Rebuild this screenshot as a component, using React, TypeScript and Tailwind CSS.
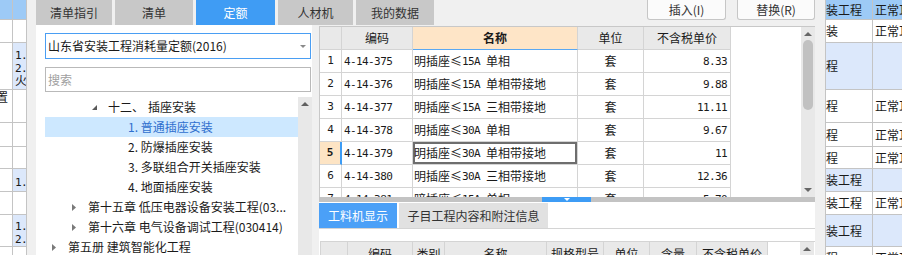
import React from 'react';

const LINE = 'border-[#c4c4c4]';

type BgRow = { h: string; head?: boolean; blue?: boolean; l1?: string; l2?: string[]; r1: string; r2: string };

const bgRows: BgRow[] = [
  { h: 'h-[20px]', head: true, r1: '装工程', r2: '正常耳' },
  { h: 'h-[23px]', r1: '装', r2: '正常耳' },
  { h: 'h-[47px]', blue: true, l2: ['1.', '2.', '火'], r1: '程', r2: '' },
  { h: 'h-[33px]', l1: '置', r1: '程', r2: '正常耳' },
  { h: 'h-[24px]', r1: '程', r2: '正常耳' },
  { h: 'h-[22px]', r1: '程', r2: '正常耳' },
  { h: 'h-[23px]', blue: true, l2: ['1.'], r1: '装工程', r2: '' },
  { h: 'h-[23px]', r1: '装工程', r2: '正常耳' },
  { h: 'h-[32px]', blue: true, l2: ['1.', '2.'], r1: '装工程', r2: '' },
  { h: 'h-[23px]', r1: '程', r2: '正常耳' },
];

function cellBg(r: BgRow) {
  if (r.head) return 'bg-[#9dcaf6]';
  if (r.blue) return 'bg-[#dce8fb]';
  return 'bg-white';
}

function Mixed({ t }: { t: string }) {
  const parts = t.split(/([A-Za-z0-9.\- ]+|≤)/).filter(Boolean);
  return (
    <>
      {parts.map((p, i) => {
        if (p === '≤')
          return (
            <span key={i} className="inline-block w-[12px] text-center">
              ≤
            </span>
          );
        if (/^[A-Za-z0-9.\- ]+$/.test(p))
          return (
            <span key={i} className="font-['DejaVu_Sans_Mono',monospace] text-[11px] tracking-[-0.6px] whitespace-pre">
              {p}
            </span>
          );
        return <span key={i}>{p}</span>;
      })}
    </>
  );
}

function Up({ color = '#666666' }: { color?: string }) {
  return (
    <svg width="8" height="4" viewBox="0 0 8 4" className="block shrink-0">
      <path d="M0 4 L4 0 L8 4 Z" fill={color} />
    </svg>
  );
}
function Down({ color = '#666666' }: { color?: string }) {
  return (
    <svg width="8" height="4" viewBox="0 0 8 4" className="block shrink-0">
      <path d="M0 0 L8 0 L4 4 Z" fill={color} />
    </svg>
  );
}

function LeftSliver() {
  return (
    <div className={`w-[27px] shrink-0 flex flex-col border-r ${LINE} overflow-hidden`}>
      {bgRows.map((r, i) => (
        <div key={i} className={`${r.h} shrink-0 flex border-b ${LINE}`}>
          <div className={`w-[13px] shrink-0 border-r ${LINE} overflow-hidden flex items-start ${r.head ? 'bg-[#9dcaf6]' : 'bg-white'}`}>
            {r.l1 && <span className="-ml-[4px] mt-[1px] leading-none text-[12px]">{r.l1}</span>}
          </div>
          <div className={`flex-1 overflow-hidden flex flex-col justify-center pl-[2px] ${cellBg(r)}`}>
            {r.l2?.map((s, j) => (
              <div key={j} className="leading-[13px] h-[13px] whitespace-nowrap">
                {s === '火' ? (
                  <span className="text-[12px]">{s}</span>
                ) : (
                  <span className="font-['DejaVu_Sans_Mono',monospace] text-[11px] tracking-[-0.6px]">{s}</span>
                )}
              </div>
            ))}
          </div>
        </div>
      ))}
    </div>
  );
}

function RightSliver() {
  return (
    <div className={`flex-1 flex flex-col border-l ${LINE} overflow-hidden`}>
      {bgRows.map((r, i) => (
        <div key={i} className={`${r.h} shrink-0 flex border-b ${LINE} ${cellBg(r)}`}>
          <div className={`w-[47px] shrink-0 border-r ${LINE} flex items-center overflow-hidden whitespace-nowrap leading-none`}>
            {r.r1}
          </div>
          <div className="flex-1 flex items-center pl-[2px] overflow-hidden whitespace-nowrap leading-none">{r.r2}</div>
        </div>
      ))}
    </div>
  );
}

const topTabs = [
  { t: '清单指引', w: 'w-[76px]' },
  { t: '清单', w: 'w-[78px]' },
  { t: '定额', w: 'w-[79px]', active: true },
  { t: '人材机', w: 'w-[75px]' },
  { t: '我的数据', w: 'w-[78px]' },
];

type TreeItem = { t: string; pre?: string; pl: string; tri?: 'open' | 'closed'; sel?: boolean };

const tree: TreeItem[] = [
  { pre: '十二、', t: '插座安装', pl: 'pl-[47px]', tri: 'open' },
  { t: '1. 普通插座安装', pl: 'pl-[83px]', sel: true },
  { t: '2. 防爆插座安装', pl: 'pl-[83px]' },
  { t: '3. 多联组合开关插座安装', pl: 'pl-[83px]' },
  { t: '4. 地面插座安装', pl: 'pl-[83px]' },
  { t: '第十五章 低压电器设备安装工程(03...', pl: 'pl-[27px]', tri: 'closed' },
  { t: '第十六章 电气设备调试工程(030414)', pl: 'pl-[27px]', tri: 'closed' },
  { t: '第五册 建筑智能化工程', pl: 'pl-[7px]', tri: 'closed' },
];

function LeftPanel() {
  return (
    <div className="w-[276px] shrink-0 bg-white flex flex-col pl-[9px] pt-[8px]">
      <div className="w-[266px] h-[26px] border border-[#4a9ef3] flex items-center pl-[2px] pr-[4px]">
        <span className="flex-1 leading-none whitespace-nowrap">山东省安装工程消耗量定额(2016)</span>
        <svg width="6" height="3" viewBox="0 0 6 3" className="block">
          <path d="M0 0 L6 0 L3 3 Z" fill="#8a8a8a" />
        </svg>
      </div>
      <div className="mt-[8px] w-[266px] h-[25px] border border-[#b9b9b9] flex items-center pl-[2px] text-[#a0a0a0] leading-none">
        搜索
      </div>
      <div className="mt-[5px] flex flex-1 min-h-0">
        <div className="w-[253px] flex flex-col">
          {tree.map((it, i) => (
            <div
              key={i}
              className={`h-[20px] shrink-0 flex items-center whitespace-nowrap leading-none ${it.pl} ${
                it.sel ? 'bg-[#cde8ff] text-[#2f6fce]' : 'text-[#1a1a1a]'
              }`}
            >
              {it.tri === 'open' && (
                <span className="w-[16px] flex">
                  <svg width="5" height="5" viewBox="0 0 5 5" className="block">
                    <path d="M5 0 L5 5 L0 5 Z" fill="#595959" />
                  </svg>
                </span>
              )}
              {it.tri === 'closed' && (
                <span className="w-[16px] flex">
                  <svg width="4" height="7" viewBox="0 0 4 7" className="block">
                    <path d="M0 0 L4 3.5 L0 7 Z" fill="#7a7a7a" />
                  </svg>
                </span>
              )}
              {it.pre && <span className="mr-[4px]">{it.pre}</span>}
              <span>{it.t}</span>
            </div>
          ))}
        </div>
        <div className="w-[14px] bg-[#e8e8e8] flex flex-col items-center pt-[5px]">
          <Up color="#606060" />
        </div>
      </div>
    </div>
  );
}

const rows = [
  ['1', '4-14-375', '明插座≤15A 单相', '套', '8.33'],
  ['2', '4-14-376', '明插座≤15A 单相带接地', '套', '9.88'],
  ['3', '4-14-377', '明插座≤15A 三相带接地', '套', '11.11'],
  ['4', '4-14-378', '明插座≤30A 单相', '套', '9.67'],
  ['5', '4-14-379', '明插座≤30A 单相带接地', '套', '11'],
  ['6', '4-14-380', '明插座≤30A 三相带接地', '套', '12.36'],
  ['7', '4-14-381', '暗插座≤15A 单相', '套', '5.70'],
];

const G = 'border-[#d4d4d4]';

function MainTable() {
  return (
    <div className="h-[171px] shrink-0 flex border-t border-l border-[#c8c8c8] bg-white overflow-hidden">
      <div className="flex-1 flex flex-col">
        <div className="h-[23px] shrink-0 flex">
          <div className={`w-[22px] h-full bg-[#e9e9e9] border-r border-b ${G}`} />
          <div className={`w-[71px] h-full bg-[#e9e9e9] border-r border-b ${G} flex items-center justify-center leading-none`}>编码</div>
          <div className={`w-[165px] h-full bg-[#fee5c7] border-r ${G} border-b border-b-[#5aa8f2] flex items-center justify-center leading-none font-bold`}>
            名称
          </div>
          <div className={`w-[66px] h-full bg-[#e9e9e9] border-r border-b ${G} flex items-center justify-center leading-none`}>单位</div>
          <div className={`w-[87px] h-full bg-[#e9e9e9] border-r border-b ${G} flex items-center justify-center leading-none`}>不含税单价</div>
        </div>
        {rows.map((r) => {
          const sel = r[0] === '5';
          return (
            <div key={r[0]} className="h-[23px] shrink-0 flex">
              <div
                className={`w-[22px] h-full border-b ${G} flex items-center justify-center font-['DejaVu_Sans_Mono',monospace] text-[11px] ${
                  sel ? 'bg-[#fde4c4] font-bold border-r-2 border-r-[#3d9cf5]' : `bg-white border-r ${G}`
                }`}
              >
                {r[0]}
              </div>
              <div className={`w-[71px] h-full border-r border-b ${G} flex items-center pl-[2px] leading-none`}>
                <Mixed t={r[1]} />
              </div>
              <div
                className={`w-[165px] h-full border-r border-b ${G} flex items-center pl-[1px] leading-none whitespace-nowrap ${
                  sel ? 'shadow-[inset_0_0_0_2px_#6e6e6e]' : ''
                }`}
              >
                <Mixed t={r[2]} />
              </div>
              <div className={`w-[66px] h-full border-r border-b ${G} flex items-center justify-center leading-none`}>{r[3]}</div>
              <div className={`w-[87px] h-full border-r border-b ${G} flex items-center justify-end pr-[3px] leading-none`}>
                <Mixed t={r[4]} />
              </div>
            </div>
          );
        })}
      </div>
      <div className="w-[14px] shrink-0 bg-[#e8e8e8] flex flex-col items-center pt-[5px] pb-[5px]">
        <Up />
        <div className="mt-[4px] w-[10px] h-[70px] rounded-full bg-[#c1c1c1]" />
        <div className="flex-1" />
        <Down />
      </div>
    </div>
  );
}

const subCols = [
  { t: '', w: 'w-[27px]' },
  { t: '编码', w: 'w-[65px]' },
  { t: '类别', w: 'w-[32px]' },
  { t: '名称', w: 'w-[102px]' },
  { t: '规格型号', w: 'w-[57px]' },
  { t: '单位', w: 'w-[46px]' },
  { t: '含量', w: 'w-[47px]' },
  { t: '不含税单价', w: 'w-[71px]' },
];

function BottomPanel() {
  return (
    <div className="flex-1 min-h-0 bg-white flex flex-col">
      <div className={`h-[27px] shrink-0 pt-[1px] border-b ${G} flex`}>
        <div className="w-[78px] h-[25px] bg-[#4ba0f7] text-white flex items-center justify-center leading-none">工料机显示</div>
        <div className="ml-[2px] w-[149px] h-[25px] bg-[#e1e1e1] text-[#333] flex items-center justify-center leading-none">
          子目工程内容和附注信息
        </div>
      </div>
      <div className="h-[12px] shrink-0" />
      <div className={`flex-1 flex ml-[1px] border-t border-l ${G}`}>
        <div className="flex h-[23px]">
          {subCols.map((c, i) => (
            <div key={i} className={`${c.w} h-full bg-[#e9e9e9] border-r ${G} flex items-center justify-center leading-none`}>
              {c.t}
            </div>
          ))}
        </div>
        <div className="flex-1" />
        <div className="w-[14px] mr-[1px] bg-[#e8e8e8] flex flex-col items-center pt-[5px]">
          <Up />
        </div>
      </div>
    </div>
  );
}

function Dialog() {
  return (
    <div className="w-[798px] shrink-0 bg-[#f0f0f0] flex flex-col pl-[9px] pr-[10px]">
      <div className="h-[25px] shrink-0 flex">
        <div className="flex gap-[3px]">
          {topTabs.map((t) => (
            <div
              key={t.t}
              className={`${t.w} h-[25px] flex items-center justify-center leading-none ${
                t.active ? 'bg-[#3f9cf4] text-white' : 'bg-[#c8c8c8] text-[#333]'
              }`}
            >
              {t.t}
            </div>
          ))}
        </div>
        <div className="flex-1" />
        <div className="flex gap-[11px]">
          <div className="w-[79px] h-[20px] bg-[#fbfbfb] border border-t-0 border-[#c6c6c6] rounded-b-[3px] flex items-center justify-center leading-none text-[#333]">
            插入(I)
          </div>
          <div className="w-[78px] h-[20px] bg-[#fbfbfb] border border-t-0 border-[#c6c6c6] rounded-b-[3px] flex items-center justify-center leading-none text-[#333]">
            替换(R)
          </div>
        </div>
      </div>
      <div className="flex h-[230px]">
        <LeftPanel />
        <div className="w-[7px] shrink-0" />
        <div className="w-[496px] shrink-0 flex flex-col pt-[1px]">
          <MainTable />
          <div className="h-[5px] shrink-0 flex bg-[#c3c3c3]">
            <div className="w-[223px]" />
            <div className="w-[49px] bg-[#3d9cf5] flex items-center justify-center">
              <svg width="6" height="3" viewBox="0 0 6 3" className="block">
                <path d="M0 0 L6 0 L3 3 Z" fill="#ffffff" />
              </svg>
            </div>
          </div>
          <BottomPanel />
        </div>
      </div>
    </div>
  );
}

export default function App() {
  return (
    <div className="w-[902px] h-[255px] overflow-hidden flex bg-white text-[12px] text-[#1a1a1a] font-['Noto_Sans_CJK_SC',sans-serif]">
      <LeftSliver />
      <Dialog />
      <RightSliver />
    </div>
  );
}
